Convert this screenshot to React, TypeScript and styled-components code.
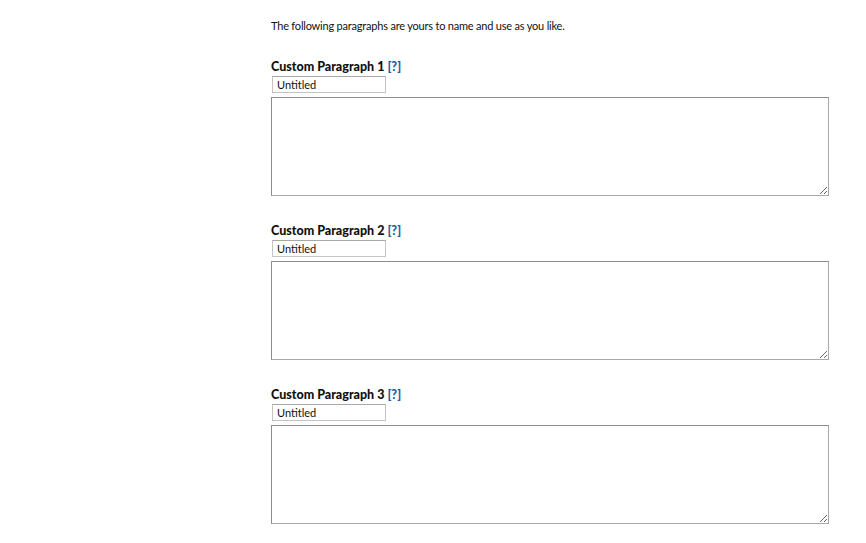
import React from "react";
import styled, { createGlobalStyle } from "styled-components";

const Global = createGlobalStyle`
  html, body { margin: 0; padding: 0; background: #fff; }
  body { font-family: Lato, "Liberation Sans", sans-serif; color: #111; }
`;

const Page = styled.div`
  padding: 19px 0 0 271px;
  width: 558px;
`;

const Intro = styled.p`
  margin: 0 0 27px 0;
  font-size: 11px;
  line-height: 14px;
  letter-spacing: -0.2px;
`;

const Section = styled.div`
  display: flex;
  flex-direction: column;
  margin-bottom: 28px;
`;

const Heading = styled.div`
  font-size: 12.5px;
  font-weight: 900;
  line-height: 14px;
  margin-bottom: 2px;
  color: #111;
`;

const Help = styled.a`
  color: #1b5fa3;
  text-decoration: none;
  margin-left: 3px;
  font-weight: 900;
`;

const NameInput = styled.input`
  box-sizing: border-box;
  width: 114px;
  height: 17px;
  margin: 0 0 4px 1px;
  padding: 0 4px;
  border: 1px solid #c4c4c4;
  border-top-color: #a8a8a8;
  font-family: Lato, "Liberation Sans", sans-serif;
  font-size: 11px;
  color: #111;
  outline: none;
`;

const Body = styled.textarea`
  box-sizing: border-box;
  width: 558px;
  height: 99px;
  margin: 0;
  border: 1px solid #a9a9a9;
  border-top-color: #8c8c8c;
  border-left-color: #8c8c8c;
  font-family: Lato, "Liberation Sans", sans-serif;
  font-size: 11px;
  outline: none;
`;

const items = [1, 2, 3];

export default function App() {
  return (
    <>
      <Global />
      <Page>
        <Intro>The following paragraphs are yours to name and use as you like.</Intro>
        {items.map((n) => (
          <Section key={n}>
            <Heading>
              Custom Paragraph {n}
              <Help href="#">[?]</Help>
            </Heading>
            <NameInput defaultValue="Untitled" />
            <Body />
          </Section>
        ))}
      </Page>
    </>
  );
}
